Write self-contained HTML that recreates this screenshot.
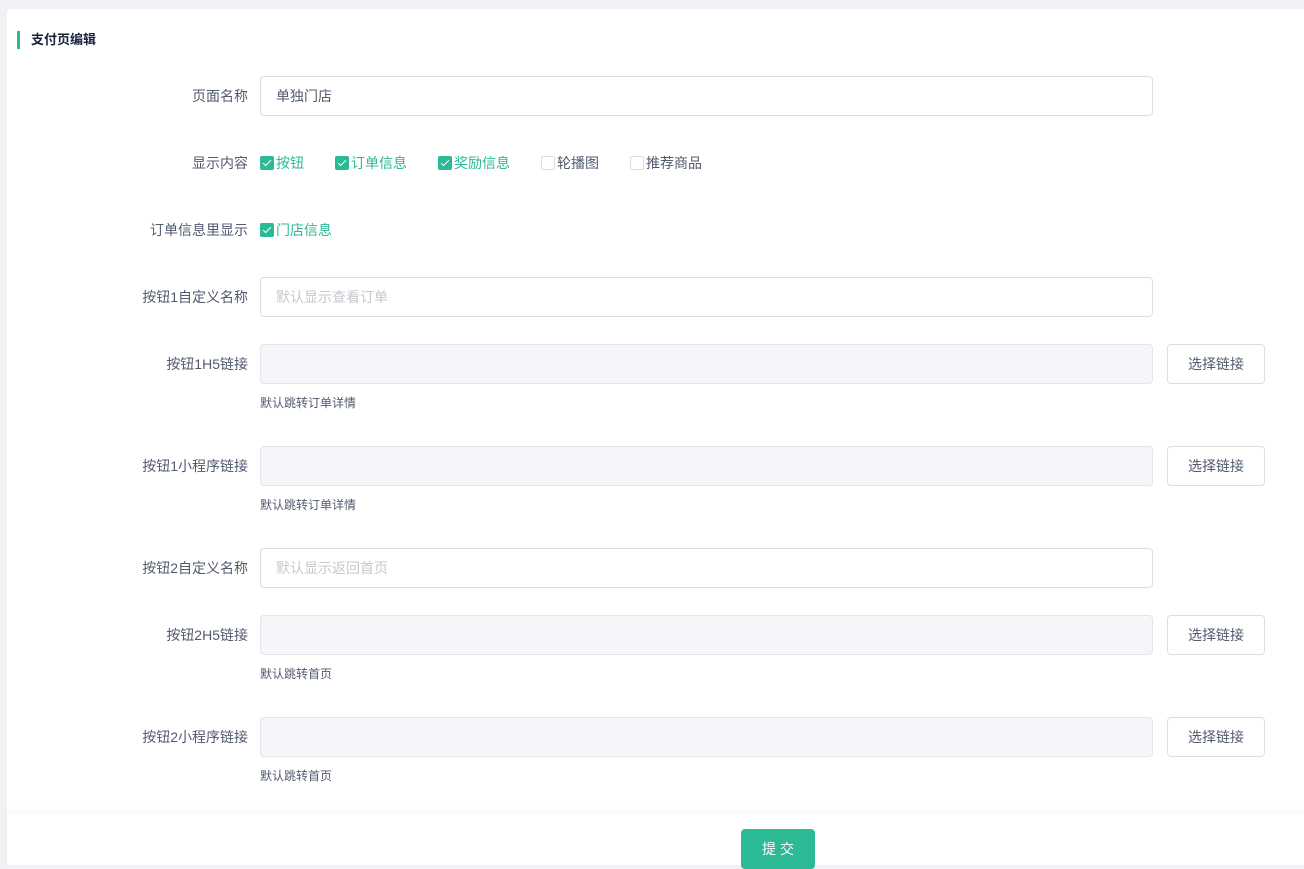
<!DOCTYPE html>
<html><head><meta charset="utf-8"><style>
*{box-sizing:border-box;margin:0;padding:0}
body{width:1304px;height:865px;overflow:hidden;background:#f0f2f5;font-family:"Liberation Sans","Noto Sans CJK SC",sans-serif;font-size:13px;color:#515a6e;position:relative}
.card{position:absolute;left:7px;top:9px;width:1297px;height:805px;background:#fff;border-radius:4px 0 0 0}
.title{position:absolute;left:17px;top:31px;height:18px;border-left:3px solid #2bb996;padding-left:11px;font-size:13px;font-weight:bold;color:#17233d;line-height:18px}
.lbl{position:absolute;right:1056px;width:200px;text-align:right;font-size:14px;line-height:16px;color:#515a6e}
.inp{position:absolute;left:260px;width:893px;height:40px;border:1px solid #dcdee2;border-radius:4px;padding-left:15px;line-height:38px;font-size:14px;color:#515a6e}
.inp.ph{color:#c5c8ce}
.inp.dis{background:#f5f6fa;border-color:#e3e5ea}
.btn{position:absolute;left:1167px;width:98px;height:40px;border:1px solid #dcdee2;border-radius:4px;text-align:center;line-height:38px;font-size:14px;color:#515a6e;background:#fff}
.help{position:absolute;left:260px;font-size:12px;line-height:14px;color:#515a6e}
.cb{position:absolute;font-size:14px;line-height:16px}
.cb i{display:inline-block;width:14px;height:14px;border:1px solid #dcdee2;border-radius:2px;vertical-align:-2px;margin-right:2px;position:relative;background:#fff}
.cb.on{color:#2bb996}
.cb.on i{background:#2bb996;border-color:#2bb996}
.cb.on i:after{content:"";position:absolute;left:4px;top:1px;width:3px;height:7px;border:solid #fff;border-width:0 1.5px 1.5px 0;transform:rotate(45deg)}
.foot{position:absolute;left:7px;top:814px;width:1297px;height:51px;background:#fff;box-shadow:0 -3px 6px rgba(0,0,0,.04)}
.sub{position:absolute;left:741px;top:829px;width:74px;height:40px;background:#2bb996;color:#fff;border-radius:4px;text-align:center;line-height:40px;font-size:14px;letter-spacing:4px;padding-left:4px}
</style></head><body>
<div class="card"></div>
<div class="title">支付页编辑</div>

<div class="lbl" style="top:88px">页面名称</div>
<div class="inp" style="top:76px">单独门店</div>

<div class="lbl" style="top:155px">显示内容</div>
<div class="cb on" style="left:260px;top:155px"><i></i>按钮</div>
<div class="cb on" style="left:335px;top:155px"><i></i>订单信息</div>
<div class="cb on" style="left:438px;top:155px"><i></i>奖励信息</div>
<div class="cb" style="left:541px;top:155px"><i></i>轮播图</div>
<div class="cb" style="left:630px;top:155px"><i></i>推荐商品</div>

<div class="lbl" style="top:222px">订单信息里显示</div>
<div class="cb on" style="left:260px;top:222px"><i></i>门店信息</div>

<div class="lbl" style="top:289px">按钮1自定义名称</div>
<div class="inp ph" style="top:277px">默认显示查看订单</div>

<div class="lbl" style="top:356px">按钮1H5链接</div>
<div class="inp dis" style="top:344px"></div>
<div class="btn" style="top:344px">选择链接</div>
<div class="help" style="top:396px">默认跳转订单详情</div>

<div class="lbl" style="top:458px">按钮1小程序链接</div>
<div class="inp dis" style="top:446px"></div>
<div class="btn" style="top:446px">选择链接</div>
<div class="help" style="top:498px">默认跳转订单详情</div>

<div class="lbl" style="top:560px">按钮2自定义名称</div>
<div class="inp ph" style="top:548px">默认显示返回首页</div>

<div class="lbl" style="top:627px">按钮2H5链接</div>
<div class="inp dis" style="top:615px"></div>
<div class="btn" style="top:615px">选择链接</div>
<div class="help" style="top:667px">默认跳转首页</div>

<div class="lbl" style="top:729px">按钮2小程序链接</div>
<div class="inp dis" style="top:717px"></div>
<div class="btn" style="top:717px">选择链接</div>
<div class="help" style="top:769px">默认跳转首页</div>

<div class="foot"></div>
<div class="sub">提交</div>
</body></html>
